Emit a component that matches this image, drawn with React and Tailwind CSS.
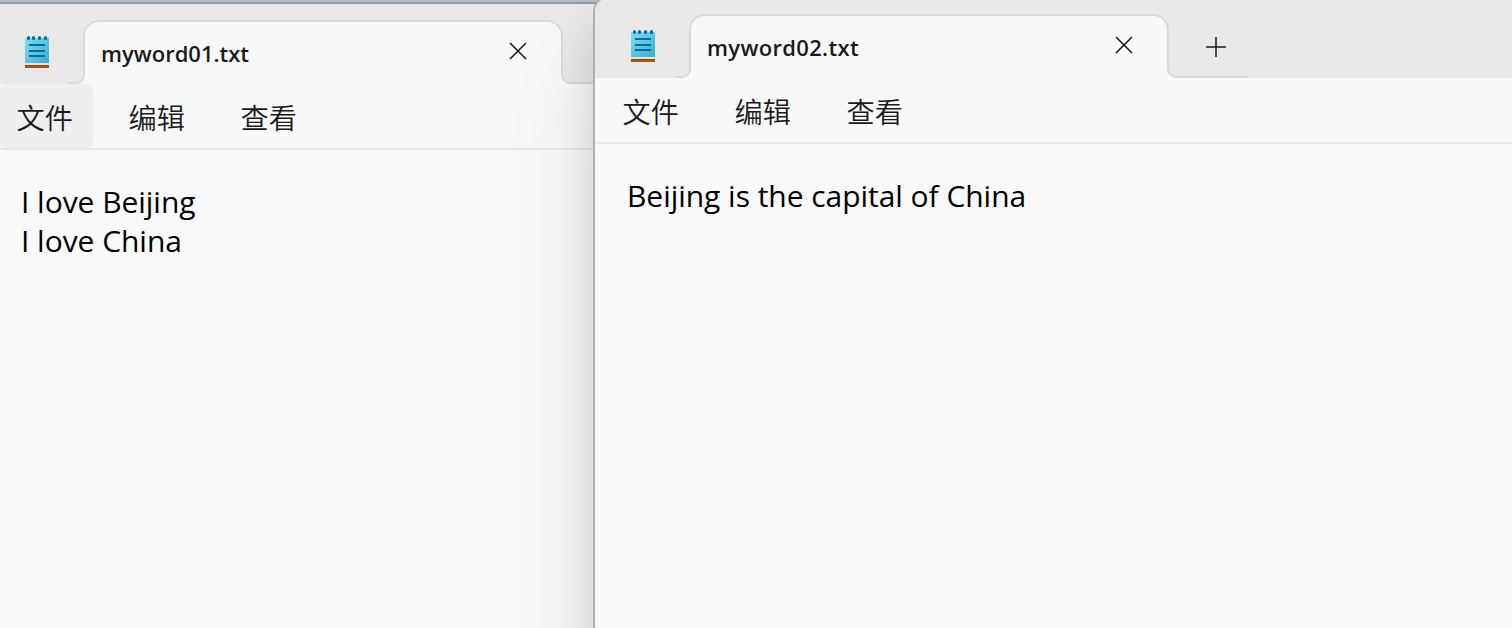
import React from "react";

function NotepadIcon() {
  return (
    <svg width="24" height="32" viewBox="0 0 24 32" className="block shrink-0">
      <defs>
        <linearGradient id="page" x1="0" y1="0" x2="1" y2="1">
          <stop offset="0" stopColor="#7fdcf5" />
          <stop offset="1" stopColor="#3aaccf" />
        </linearGradient>
      </defs>
      <rect x="0" y="26" width="24" height="3" fill="#dfe3e6" />
      <rect x="0" y="29" width="24" height="3" rx="0.6" fill="#b4540c" />
      <rect x="0" y="29" width="24" height="1" fill="#94430b" />
      <path d="M0 2h24v25H0z" fill="url(#page)" />
      <path
        d="M3.5 1.5v1M8.5 1.5v1M14.5 1.5v1M20.5 1.5v1"
        stroke="#006c95"
        strokeWidth="3"
        strokeLinecap="round"
      />
      <path d="M4 9h16M4 15h16M4 20h16" stroke="#00719c" strokeWidth="2" />
    </svg>
  );
}

function Tab({ title, titleClass }) {
  return (
    <div className="relative flex h-16 w-[480px] shrink-0 items-start justify-between rounded-t-2xl border-2 border-b-0 border-[#d9d9d9] bg-[#f8f8f8] pl-4 pr-[34px]">
      <span className={`mt-[15px] text-[22px] leading-8 font-semibold text-[#1a1a1a] ${titleClass}`}>
        {title}
      </span>
      <svg width="18" height="18" viewBox="0 0 18 18" className="mt-5 block">
        <path d="M1 1l16 16M17 1L1 17" stroke="#1a1a1a" strokeWidth="1.6" />
      </svg>
      <div className="absolute bottom-0 -left-4 h-3 w-4 bg-[#f8f8f8]">
        <div className="h-3 w-4 rounded-br-[9px] border-r-2 border-b-2 border-[#d9d9d9] bg-[#e8e8e8]" />
      </div>
      <div className="absolute -right-[82px] bottom-0 h-3 w-[82px] bg-[#f8f8f8]">
        <div className="h-3 w-[82px] rounded-bl-[9px] border-b-2 border-l-2 border-[#d9d9d9] bg-[#e8e8e8]" />
      </div>
    </div>
  );
}

function MenuBar({ hovered }) {
  return (
    <div className="flex h-[66px] shrink-0 gap-[18px] border-b-2 border-[#e9e9e9] bg-[#f8f8f8] pl-[10px]">
      {["文件", "编辑", "查看"].map((label) => (
        <div
          key={label}
          className={`flex h-16 w-[94px] items-center rounded-lg pt-1 pl-[17.5px] text-[28.2px] leading-10 font-[350] text-[#1a1a1a] ${
            hovered === label ? "bg-[#efefef]" : ""
          }`}
        >
          {label}
        </div>
      ))}
    </div>
  );
}

function NotepadWindow({ title, titleClass, lines, hovered, className }) {
  return (
    <section
      className={`absolute flex flex-col overflow-hidden rounded-tl-2xl border-t-2 border-l-2 bg-[#f9f9f9] ${className}`}
    >
      <header className="flex h-20 shrink-0 bg-[#e8e8e8]">
        <div className="w-[94px] shrink-0 pt-8 pl-9">
          <NotepadIcon />
        </div>
        <div className="pt-4">
          <Tab title={title} titleClass={titleClass} />
        </div>
        <div className="relative pt-[39px] pl-[37px]">
          <svg width="20" height="20" viewBox="0 0 20 20" className="block">
            <path d="M0 10h20M10 0v20" stroke="#1a1a1a" strokeWidth="1.5" />
          </svg>
        </div>
      </header>
      <MenuBar hovered={hovered} />
      <div className="pt-8 pl-8 text-[30px] leading-[39px] text-black">
        {lines.map((line) => (
          <p key={line} className="tracking-[-0.04px] whitespace-nowrap">{line}</p>
        ))}
      </div>
    </section>
  );
}

export default function App() {
  return (
    <main className="relative h-[628px] w-[1512px] overflow-hidden bg-[#b3becb] font-['Open_Sans','Noto_Sans_CJK_SC',sans-serif]">
      <NotepadWindow
        title="myword01.txt"
        titleClass="tracking-normal"
        lines={["I love Beijing", "I love China"]}
        hovered="文件"
        className="top-[2px] -left-[13px] h-[700px] w-[720px] border-[#959ba4]"
      />
      <NotepadWindow
        title="myword02.txt"
        titleClass="tracking-[0.33px]"
        lines={["Beijing is the capital of China"]}
        className="-top-1 left-[593px] h-[1000px] w-[940px] border-[#b0b0b0] shadow-[0_70px_90px_rgba(0,0,0,0.1),0_24px_40px_rgba(0,0,0,0.12)]"
      />
    </main>
  );
}
